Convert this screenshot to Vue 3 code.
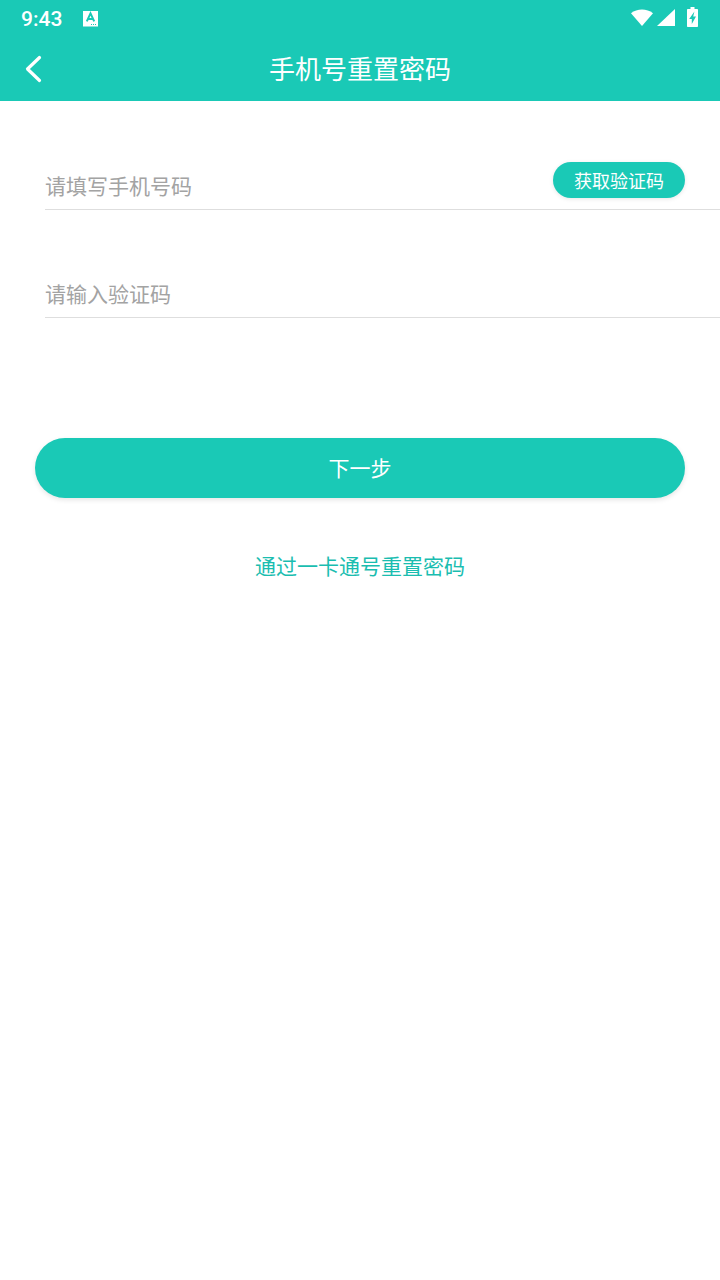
<template>
  <div class="page">
    <header class="top">
      <div class="status-bar">
        <span class="time">9:43</span>
        <svg class="notif" width="16" height="17" viewBox="0 0 16 17">
          <rect x="0" y="1" width="15" height="15.5" fill="#fff" />
          <path d="M3.8 11.4 L7.5 3.4 L11.2 11.4 M5.2 9 H9.8" fill="none" stroke="#1ac9b6" stroke-width="2" />
          <rect x="8" y="14" width="1" height="1" fill="#1ac9b6" />
          <rect x="10" y="14" width="1" height="1" fill="#1ac9b6" />
          <rect x="12" y="14" width="1" height="1" fill="#1ac9b6" />
        </svg>
        <span class="spacer"></span>
        <svg class="wifi" width="22" height="17" viewBox="0 0 22 17">
          <path d="M0 4.2 C6.2 -0.8 15.8 -0.8 22 4.2 L11 17 Z" fill="#fff" />
        </svg>
        <svg class="signal" width="18" height="17" viewBox="0 0 18 17">
          <path d="M0 17 L18 0 V17 Z" fill="#fff" />
        </svg>
        <svg class="battery" width="11" height="20" viewBox="0 0 11 20">
          <path d="M3.5 0 H7.5 V2 H10 C10.6 2 11 2.4 11 3 V19 C11 19.6 10.6 20 10 20 H1 C0.4 20 0 19.6 0 19 V3 C0 2.4 0.4 2 1 2 H3.5 Z" fill="#fff" />
          <path d="M7.4 4.5 L2.2 12 H4.8 V17 L9 9.4 H6.2 Z" fill="#1ac9b6" />
        </svg>
      </div>
      <div class="nav-bar">
        <svg class="back" width="20" height="28" viewBox="0 0 20 28">
          <path d="M16.5 2.5 L4.5 14 L16.5 25.5" fill="none" stroke="#fff" stroke-width="3.2" stroke-linecap="round" stroke-linejoin="round" />
        </svg>
        <h1 class="title">手机号重置密码</h1>
      </div>
    </header>

    <main class="form">
      <div class="field first">
        <span class="placeholder">请填写手机号码</span>
        <button class="code-btn">获取验证码</button>
      </div>
      <div class="field second">
        <span class="placeholder">请输入验证码</span>
      </div>
      <button class="next-btn">下一步</button>
      <a class="alt-link">通过一卡通号重置密码</a>
    </main>
  </div>
</template>

<script setup>
</script>

<style>
html,
body {
  background: #fff;
}
</style>

<style scoped>
.page {
  width: 720px;
  height: 1280px;
  background: #fff;
  font-family: "Roboto", "Noto Sans CJK SC", sans-serif;
  overflow: hidden;
}

.top {
  height: 101px;
  background: #1ac9b6;
  color: #fff;
}

.status-bar {
  height: 37px;
  display: flex;
  align-items: center;
  padding: 0 22px 0 21px;
}

.time {
  font-size: 21px;
  font-weight: 500;
  width: 62px;
}

.spacer {
  flex: 1;
}

.wifi {
  margin-right: 4px;
  margin-top: -3px;
}

.signal {
  margin-right: 12px;
  margin-top: -3px;
}

.battery {
  margin-top: -4px;
}

.nav-bar {
  position: relative;
  height: 64px;
  display: flex;
  align-items: center;
  justify-content: center;
}

.back {
  position: absolute;
  left: 23px;
  top: 18px;
}

.title {
  margin: 0;
  padding-top: 2px;
  font-size: 26px;
  font-weight: 400;
  line-height: 62px;
}

.form {
  display: flex;
  flex-direction: column;
  padding-left: 35px;
}

.field {
  margin-left: 10px;
  height: 48px;
  display: flex;
  align-items: center;
  justify-content: space-between;
  border-bottom: 1px solid #dedede;
}

.first {
  margin-top: 60px;
  padding-right: 35px;
}

.second {
  margin-top: 59px;
}

.placeholder {
  font-size: 21px;
  color: #a3a3a3;
  padding-bottom: 1px;
}

.code-btn {
  width: 132px;
  height: 36px;
  margin-top: -10px;
  border: none;
  border-radius: 18px;
  padding: 0;
  background: #1ac9b6;
  color: #fff;
  font-family: inherit;
  font-size: 18px;
  box-shadow: 0 1px 4px rgba(0, 0, 0, 0.1);
}

.next-btn {
  width: 650px;
  height: 60px;
  margin-top: 120px;
  border: none;
  border-radius: 30px;
  padding: 0 0 2px;
  background: #1ac9b6;
  color: #fff;
  font-family: inherit;
  font-size: 21px;
  box-shadow: 0 2px 5px rgba(0, 0, 0, 0.1);
}

.alt-link {
  width: 650px;
  margin-top: 54px;
  text-align: center;
  font-size: 21px;
  line-height: 30px;
  color: #1abdb0;
}
</style>
